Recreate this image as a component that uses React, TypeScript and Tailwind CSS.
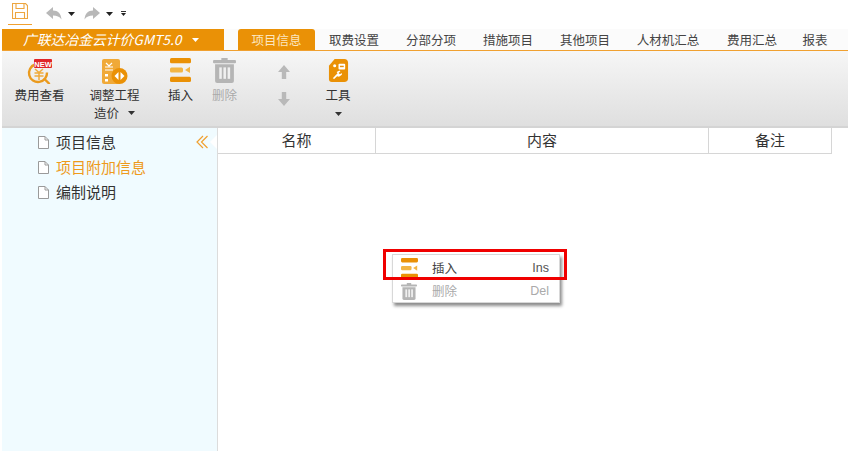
const font = "font-['Noto_Sans_CJK_SC','Liberation_Sans',sans-serif]";

const tabs = [
  { label: "项目信息", w: "w-[77px]", active: true },
  { label: "取费设置", w: "w-[78px]" },
  { label: "分部分项", w: "w-[76px]" },
  { label: "措施项目", w: "w-[78px]" },
  { label: "其他项目", w: "w-[76px]" },
  { label: "人材机汇总", w: "w-[90px]" },
  { label: "费用汇总", w: "w-[78px]" },
  { label: "报表", w: "w-[48px]" },
];

const tree = [
  { label: "项目信息" },
  { label: "项目附加信息", active: true },
  { label: "编制说明" },
];

function Caret({ className = "" }: { className?: string }) {
  return (
    <svg width="7" height="4" viewBox="0 0 7 4" className={className}>
      <path d="M0 0h7L3.5 4z" fill="currentColor" />
    </svg>
  );
}

function InsertIcon({ w = 21, h = 25 }: { w?: number; h?: number }) {
  return (
    <svg width={w} height={h} viewBox="0 0 21 24" preserveAspectRatio="none">
      <rect x="0" y="0" width="21" height="5" rx="1.5" fill="#ea9106" />
      <rect x="0" y="9" width="13" height="5" rx="1.5" fill="#f2b544" />
      <path d="M15 11.5l5-3v6z" fill="#f2b544" />
      <rect x="0" y="18" width="21" height="5" rx="1.5" fill="#ea9106" />
    </svg>
  );
}

function TrashIcon({ w = 23, h = 25 }: { w?: number; h?: number }) {
  return (
    <svg width={w} height={h} viewBox="0 0 22 24" fill="#b5b5b5" preserveAspectRatio="none">
      <rect x="0" y="2" width="22" height="3" rx="1" />
      <rect x="8" y="0" width="6" height="3" />
      <path d="M2 6h18v16a2 2 0 0 1-2 2H4a2 2 0 0 1-2-2z" />
      <rect x="6" y="9" width="2.4" height="11" fill="#f0f0f0" />
      <rect x="10" y="9" width="2.4" height="11" fill="#f0f0f0" />
      <rect x="14" y="9" width="2.4" height="11" fill="#f0f0f0" />
    </svg>
  );
}

function FeeIcon() {
  return (
    <svg width="26" height="25" viewBox="0 0 26 25">
      <path d="M8 5.500a9 9 0 1 0 12 8" fill="none" stroke="#ea9a1e" strokeWidth="2.4" />
      <path d="M17.500 20l4.500 4.500" stroke="#ea9a1e" strokeWidth="2.400" strokeLinecap="round" />
      <path d="M8 10l4 3.500 4-3.500M7.500 14h9M7.500 17h9M12 13.500V21" fill="none" stroke="#f0ab3c" strokeWidth="1.5" />
      <rect x="7" y="0" width="18" height="9" rx="1" fill="#e0262a" />
      <text x="16" y="7.500" textAnchor="middle" fontSize="7.500" fontWeight="700" fill="#fff" fontFamily="Liberation Sans">NEW</text>
    </svg>
  );
}

function AdjustIcon() {
  return (
    <svg width="26" height="25" viewBox="0 0 26 25">
      <rect x="0" y="0" width="18" height="25" rx="2" fill="#f0a938" />
      <path d="M4 4l3 3 3-3M3 8h8M3 11h8" fill="none" stroke="#fff" strokeWidth="1.2" />
      <rect x="3" y="15" width="3" height="2.500" fill="#fff" />
      <rect x="3" y="20" width="3" height="2.500" fill="#fff" />
      <circle cx="17.500" cy="17" r="8" fill="#ea9106" />
      <path d="M16.500 13v8l-4-4zM18.500 13v8l4-4z" fill="#fff" />
    </svg>
  );
}

function ToolIcon() {
  return (
    <svg width="21" height="23" viewBox="0 0 22 24">
      <path d="M7 0h10a4 4 0 0 1 4 4v16a4 4 0 0 1-4 4H4a3 3 0 0 1-3-3V7z" fill="#ea9106" />
      <rect x="11" y="5" width="7" height="6" rx="1" fill="#fff" />
      <rect x="12.500" y="7" width="4" height="1.500" fill="#ea9106" />
      <circle cx="7" cy="7" r="1.600" fill="#fff" />
      <path d="M5 20l5-5-1-1.500 3-1.500 1 1-2 1.500 1.500 1.500 2-1.500v2l-3 2-2-.5-3 3z" fill="#fff" />
    </svg>
  );
}

function VArrow({ down = false }: { down?: boolean }) {
  return (
    <svg width="12" height="14" viewBox="0 0 12 14" className={down ? "rotate-180" : ""}>
      <path d="M6 0l6 7H8.200v7H3.800V7H0z" fill="#b9b9b9" />
    </svg>
  );
}

function DocIcon() {
  return (
    <svg width="11" height="13" viewBox="0 0 11 13" className="shrink-0">
      <path d="M.5.5h6.500l3.500 3.500v8.500H.5z" fill="#fff" stroke="#9a9a9a" />
      <path d="M7 .5V4h3.500" fill="none" stroke="#9a9a9a" />
    </svg>
  );
}

export default function App() {
  return (
    <div className={`relative h-[451px] w-[862px] overflow-hidden bg-white pl-[2px] ${font}`}>
      <div className="flex w-[846px] flex-col">
        {/* quick access */}
        <div className="flex h-[29px] items-start pl-[6px] pt-[3px]">
          <div className="flex h-[22px] w-[24px] justify-center border-b border-[#f0a030]">
            <svg width="16" height="16" viewBox="0 0 16 16" fill="none" stroke="#eda640" strokeWidth="1.1">
              <path d="M.5.5h13l2 2v13H.5z" />
              <path d="M4 .5v5h8v-5M3.500 15.500v-6h9v6" />
            </svg>
          </div>
          <div className="ml-[14px] flex items-center pt-[4px] text-[#222]">
            <svg width="16" height="13" viewBox="0 0 16 13"><path d="M7 0L0 6l7 6V8.500c4 0 6.500 1 8.500 4C15 6.500 12 3.500 7 3.500z" fill="#b8b8b8" /></svg>
            <Caret className="ml-[6px]" />
            <svg width="16" height="13" viewBox="0 0 16 13" className="ml-[9px] -scale-x-100"><path d="M7 0L0 6l7 6V8.500c4 0 6.500 1 8.500 4C15 6.500 12 3.500 7 3.500z" fill="#b8b8b8" /></svg>
            <Caret className="ml-[6px]" />
            <div className="ml-[8px] flex flex-col items-center gap-[1px]">
              <div className="h-px w-[5px] bg-[#333]" />
              <Caret className="h-[3px] w-[5px]" />
            </div>
          </div>
        </div>

        {/* title + tabs */}
        <div className="flex h-[22px] border-b border-[#f0a030] bg-[#fbfbfb]">
          <div className="flex h-[21px] w-[222px] items-center bg-[#ea9106] pl-[21px] text-[13.8px] italic text-white">
            <span>广联达冶金云计价GMT5.0</span>
            <Caret className="ml-[10px] not-italic" />
          </div>
          <div className="ml-[14px] flex">
            {tabs.map((t) => (
              <div
                key={t.label}
                className={`flex h-[21px] items-center justify-center pt-[1px] text-[12.5px] ${t.w} ${
                  t.active ? "rounded-t-[3px] bg-[#ea9106] text-[#fbe6c0]" : "text-[#444]"
                }`}
              >
                {t.label}
              </div>
            ))}
          </div>
        </div>

        {/* ribbon */}
        <div className="flex h-[77px] items-start border-b-2 border-[#d4d4d4] bg-gradient-to-b from-[#f6f6f6] to-[#dfdfdf] pt-[7px] text-[12.5px] text-[#333]">
          <div className="flex w-[75px] flex-col items-center pt-[1px]">
            <FeeIcon />
            <span className="mt-[2px] leading-[17px]">费用查看</span>
          </div>
          <div className="flex w-[75px] flex-col items-center pt-[1px]">
            <AdjustIcon />
            <span className="mt-[2px] leading-[17px]">调整工程</span>
            <span className="mt-[1px] flex items-center leading-[17px]">造价<Caret className="ml-[9px]" /></span>
          </div>
          <div className="flex w-[57px] flex-col items-center">
            <InsertIcon />
            <span className="mt-[3px] leading-[17px]">插入</span>
          </div>
          <div className="flex w-[31px] flex-col items-center">
            <TrashIcon />
            <span className="mt-[3px] leading-[17px] text-[#aaa]">删除</span>
          </div>
          <div className="flex w-[88px] flex-col items-center gap-[13px] pt-[7px]">
            <VArrow />
            <VArrow down />
          </div>
          <div className="flex w-[20px] flex-col items-center pt-[1px]">
            <ToolIcon />
            <span className="mt-[4px] whitespace-nowrap leading-[17px]">工具</span>
            <Caret className="mt-[9px]" />
          </div>
        </div>

        {/* body */}
        <div className="flex h-[323px]">
          <div className="relative w-[216px] border-r border-[#dcdcdc] bg-[#f0fbff] pl-[36px] pt-[2px] text-[15px] text-[#333]">
            {tree.map((n) => (
              <div key={n.label} className={`flex h-[25px] items-center gap-[7px] ${n.active ? "text-[#ee9a1c]" : ""}`}>
                <DocIcon />
                {n.label}
              </div>
            ))}
            <svg width="13" height="14" viewBox="0 0 13 14" className="absolute right-[8px] top-[7px]" fill="none" stroke="#f0a030" strokeWidth="1.2">
              <path d="M7 1L1 7l6 6M11.500 1L5.500 7l6 6" />
            </svg>
            <svg width="7" height="14" viewBox="0 0 7 14" className="absolute right-0 top-[7px]">
              <path d="M7 0v14L0 7z" fill="#fff" />
            </svg>
          </div>
          <div className="flex-1">
            <div className="flex h-[26px] w-[614px] border-b border-r border-[#d6d6d6] text-[15px] text-[#333]">
              <div className="flex w-[158px] items-center justify-center border-r border-[#d6d6d6]">名称</div>
              <div className="flex w-[333px] items-center justify-center border-r border-[#d6d6d6]">内容</div>
              <div className="flex flex-1 items-center justify-center">备注</div>
            </div>
          </div>
        </div>
      </div>

      {/* context menu */}
      <div className="absolute left-[392px] top-[254px] h-[49px] w-[168px] border border-[#d8d8d8] bg-white text-[12.5px] shadow-[2px_3px_3px_rgba(0,0,0,0.45)]">
        <div className="flex h-[26px] items-center pl-[8px] pr-[10px] text-[#444]">
          <InsertIcon w={17} h={21} />
          <span className="ml-[14px] flex-1">插入</span>
          <span className="font-['Liberation_Sans'] text-[12.5px] text-[#555]">Ins</span>
        </div>
        <div className="flex h-[20px] items-center pl-[8px] pr-[10px] text-[#aaa]">
          <TrashIcon w={16} h={17} />
          <span className="ml-[15px] flex-1">删除</span>
          <span className="font-['Liberation_Sans'] text-[12.5px]">Del</span>
        </div>
      </div>
      <div className="absolute left-[383px] top-[249px] h-[31px] w-[184px] border-[3px] border-[#f00000]" />
    </div>
  );
}
